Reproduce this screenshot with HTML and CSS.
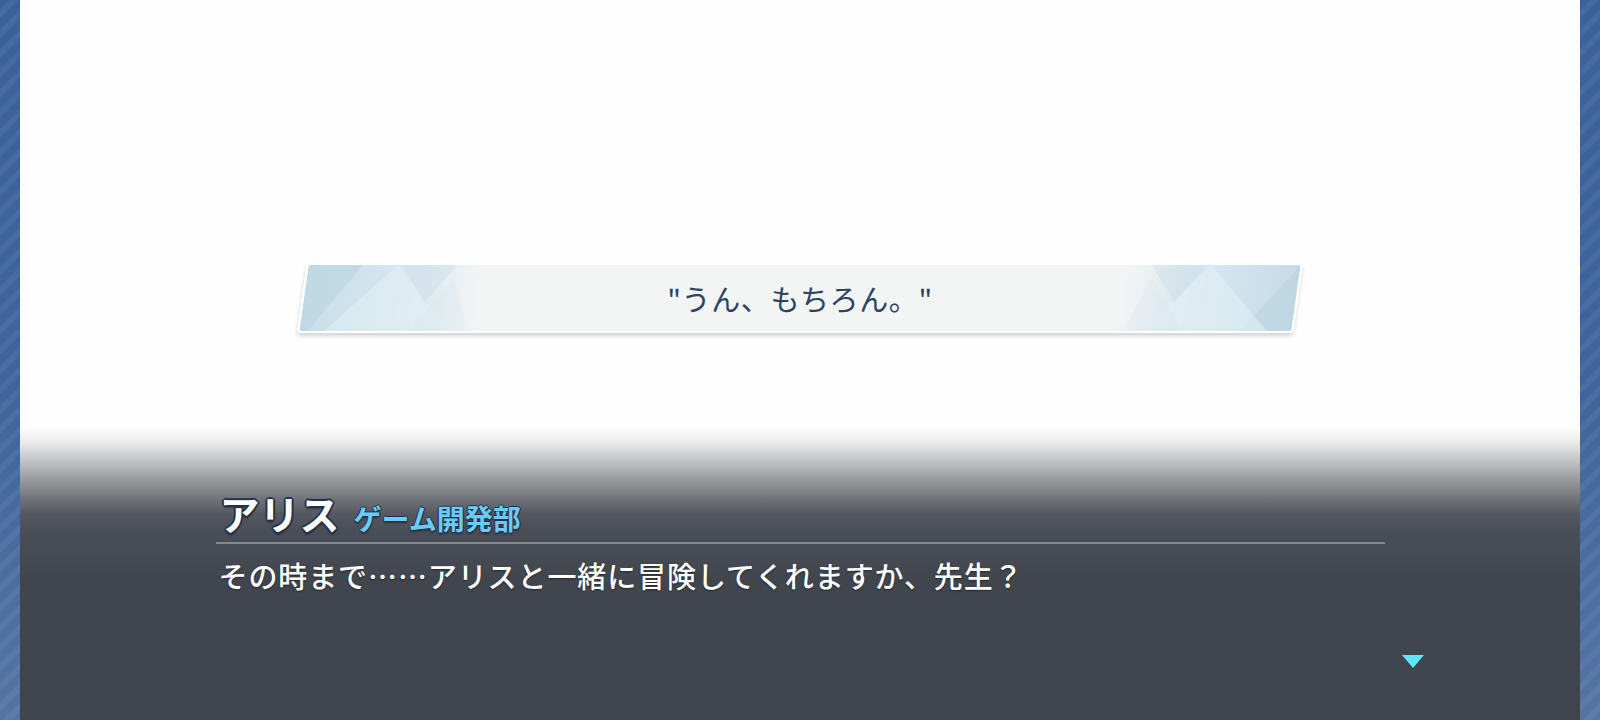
FILE: index.html
```html
<!DOCTYPE html>
<html>
	<head>
		<meta charset="UTF-8">
		<title>アリス</title>
		<link rel="stylesheet" href="styles.css">
	</head>
	<body>
		<div class="screen">
			<div class="stripe"></div>
			<div class="stage">
				<div class="choices">
					<div class="choice">
						<svg class="facets" viewBox="0 0 1000 70" preserveAspectRatio="none">
							<polygon points="0,0 55,0 8,70 0,70" fill="#b7d1e0" opacity="0.5"/>
							<polygon points="25,70 90,0 150,70" fill="#e3f0f6" opacity="0.55"/>
							<polygon points="95,0 150,0 122,40" fill="#c6dbe7" opacity="0.35"/>
							<polygon points="110,70 148,14 170,70" fill="#d3e5ee" opacity="0.25"/>
							<polygon points="1000,0 1000,70 948,70" fill="#b7d1e0" opacity="0.5"/>
							<polygon points="975,70 910,0 850,70" fill="#e3f0f6" opacity="0.55"/>
							<polygon points="905,0 850,0 878,40" fill="#c6dbe7" opacity="0.35"/>
							<polygon points="890,70 852,14 830,70" fill="#d3e5ee" opacity="0.25"/>
						</svg>
						<p class="choice-text">"うん、もちろん。"</p>
					</div>
				</div>
				<div class="dialog">
					<div class="speaker">
						<span class="name">アリス</span>
						<span class="club">ゲーム開発部</span>
					</div>
					<p class="line">その時まで……アリスと一緒に冒険してくれますか、先生？</p>
					<div class="next"></div>
				</div>
			</div>
			<div class="stripe"></div>
		</div>
	</body>
</html>
```

FILE: styles.css
```css
html, body{
	margin: 0;
	padding: 0;
}
body{
	width: 1600px;
	height: 720px;
	overflow: hidden;
	font-family: "Noto Sans CJK JP", "Noto Sans", sans-serif;
}
.screen{
	display: flex;
	height: 720px;
}
.stripe{
	width: 20px;
	flex: none;
	background:
		repeating-linear-gradient(135deg, rgba(255,255,255,0) 0, rgba(255,255,255,0) 6px, rgba(255,255,255,0.06) 8px, rgba(255,255,255,0.06) 12px, rgba(255,255,255,0) 14px),
		linear-gradient(180deg, #3a619a 0%, #3f659c 55%, #5474a3 100%);
}
.stage{
	flex: 1;
	display: flex;
	flex-direction: column;
	background: linear-gradient(180deg,
		#fefefe 0px, #fefefe 426px,
		#ececed 442px, #c4c5c7 460px,
		#9c9ea1 478px, #76797e 496px,
		#545860 514px, #4a4e56 530px,
		#464b53 556px, #41464e 580px, #40454d 720px);
}

.choices{
	padding-top: 263px;
	display: flex;
	justify-content: center;
}
.choice{
	position: relative;
	width: 996px;
	height: 70px;
	transform: skewX(-8deg);
	border: 2px solid #ffffff;
	border-radius: 4px;
	box-sizing: border-box;
	overflow: hidden;
	background: linear-gradient(90deg, #c9deea 0%, #d3e6ef 8%, #dde9ef 12%, #eaf0f2 15%, #f3f5f5 18%, #f3f5f5 82%, #eaf0f2 85%, #dde9ef 88%, #d3e6ef 92%, #c6dbe7 100%);
	box-shadow: 0 3px 4px rgba(120, 135, 150, 0.35);
}
.facets{
	position: absolute;
	left: 0;
	top: 0;
	width: 100%;
	height: 100%;
}
.choice-text{
	position: relative;
	margin: 0;
	transform: skewX(8deg);
	text-align: center;
	line-height: 66px;
	font-size: 29px;
	color: #2c4362;
	letter-spacing: 0.6px;
}

.dialog{
	position: relative;
	width: 1169px;
	margin: 155px auto 0;
}
.speaker{
	display: flex;
	align-items: baseline;
	gap: 14px;
	padding-left: 4px;
	height: 56px;
	border-bottom: 2px solid #85888d;
	box-sizing: border-box;
}
.name{
	font-size: 40px;
	font-weight: bold;
	line-height: 50px;
	color: #ffffff;
	text-shadow: 2px 0 0 #243049, -2px 0 0 #243049, 0 2px 0 #243049, 0 -2px 0 #243049, 1px 1px 0 #243049, -1px -1px 0 #243049, 1px -1px 0 #243049, -1px 1px 0 #243049, 0 3px 2px rgba(0,0,0,0.4);
}
.club{
	font-size: 28px;
	font-weight: bold;
	line-height: 50px;
	color: #6ccbf6;
	text-shadow: 1px 0 0 #243049, -1px 0 0 #243049, 0 1px 0 #243049, 0 -1px 0 #243049, 0 2px 2px rgba(0,0,0,0.4);
}
.line{
	margin: 11px 0 0 3px;
	font-size: 29px;
	font-weight: 500;
	line-height: 40px;
	color: #ffffff;
	letter-spacing: 0.9px;
	text-shadow: 0 1px 2px rgba(0,0,0,0.45);
}
.next{
	position: absolute;
	right: -39px;
	top: 167px;
	width: 0;
	height: 0;
	border-left: 11px solid transparent;
	border-right: 11px solid transparent;
	border-top: 13px solid #5de6f9;
}
```
